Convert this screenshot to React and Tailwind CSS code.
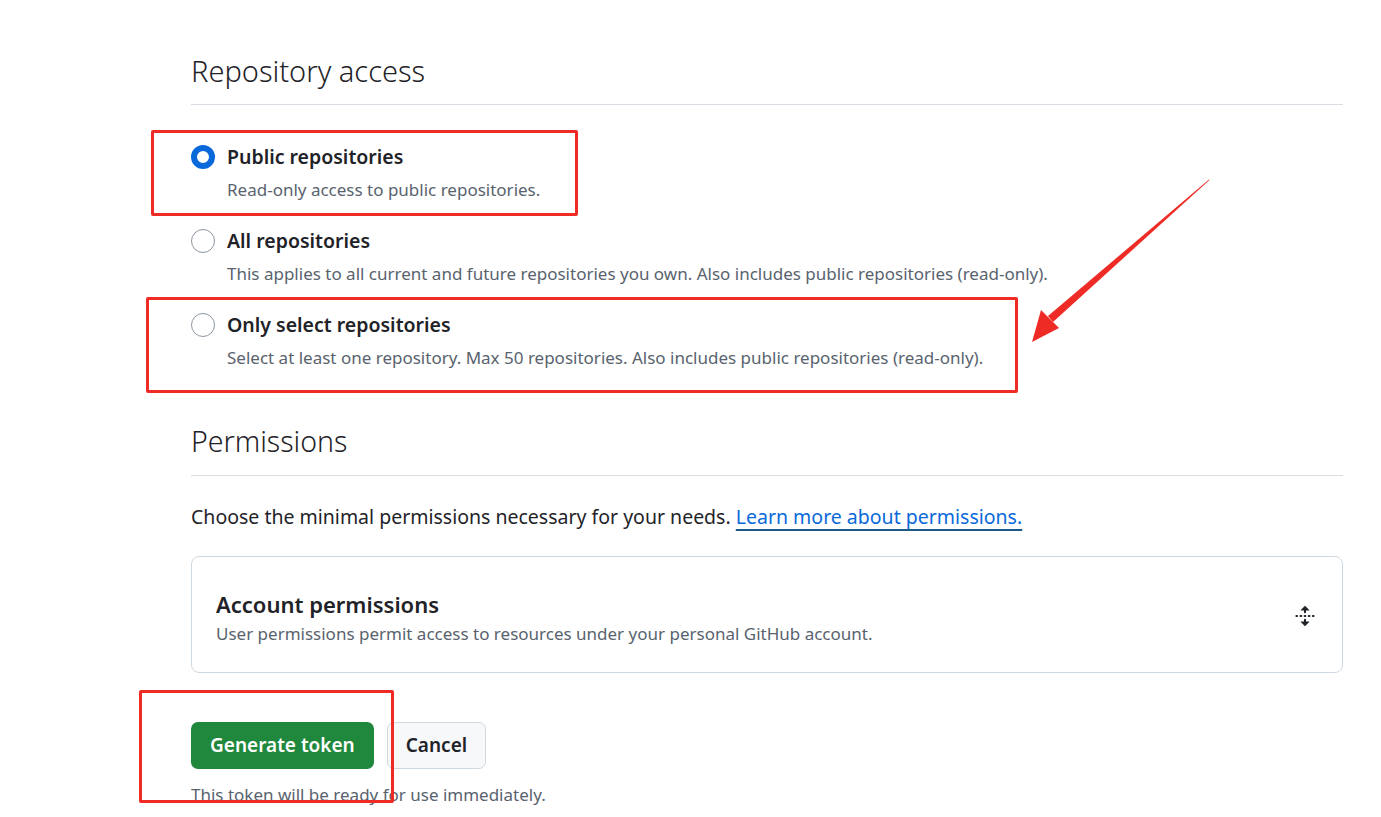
import React from "react";

const options = [
  {
    title: "Public repositories",
    desc: "Read-only access to public repositories.",
    checked: true,
  },
  {
    title: "All repositories",
    desc: "This applies to all current and future repositories you own. Also includes public repositories (read-only).",
  },
  {
    title: "Only select repositories",
    desc: "Select at least one repository. Max 50 repositories. Also includes public repositories (read-only).",
  },
];

const Radio = ({ checked }) =>
  checked ? (
    <span className="w-[24px] h-[24px] rounded-full border-[6px] border-[#0969da] bg-white shrink-0" />
  ) : (
    <span className="w-[24px] h-[24px] rounded-full border border-[#8c959f] bg-white shrink-0" />
  );

const UnfoldIcon = () => (
  <svg width="22" height="22" viewBox="0 0 16 16" fill="#1f2328">
    <path d="m8.177.677 2.896 2.896a.25.25 0 0 1-.177.427H8.75v1.25a.75.75 0 0 1-1.5 0V4H5.104a.25.25 0 0 1-.177-.427L7.823.677a.25.25 0 0 1 .354 0ZM7.25 10.75a.75.75 0 0 1 1.5 0V12h2.146a.25.25 0 0 1 .177.427l-2.896 2.896a.25.25 0 0 1-.354 0l-2.896-2.896A.25.25 0 0 1 5.104 12H7.25v-1.25Zm-5-2a.75.75 0 0 0 0-1.5h-.5a.75.75 0 0 0 0 1.5h.5ZM6 8a.75.75 0 0 1-.75.75h-.5a.75.75 0 0 1 0-1.5h.5A.75.75 0 0 1 6 8Zm2.25.75a.75.75 0 0 0 0-1.5h-.5a.75.75 0 0 0 0 1.5h.5ZM12 8a.75.75 0 0 1-.75.75h-.5a.75.75 0 0 1 0-1.5h.5A.75.75 0 0 1 12 8Zm2.25.75a.75.75 0 0 0 0-1.5h-.5a.75.75 0 0 0 0 1.5h.5Z" />
  </svg>
);

const App = () => {
  return (
    <div className="relative w-[1381px] h-[817px] bg-white overflow-hidden font-['Noto_Sans',sans-serif] text-[#1f2328]">
      <div className="ml-[191px] w-[1152px] pt-[51px]">
        {/* Repository access */}
        <h2 className="text-[29px] font-light leading-[40px] pb-[13px] border-b border-[#d8dee4]">
          Repository access
        </h2>
        <div className="mt-[37px] flex flex-col gap-[20px]">
          {options.map((o) => (
            <div key={o.title} className="flex flex-col">
              <div className="flex items-center gap-[12px] h-[30px]">
                <Radio checked={o.checked} />
                <span className="text-[19.5px] font-semibold">{o.title}</span>
              </div>
              <p className="mt-[2px] ml-[36px] text-[17px] text-[#59636e] leading-[32px]">
                {o.desc}
              </p>
            </div>
          ))}
        </div>

        {/* Permissions */}
        <h2 className="mt-[47px] text-[28.5px] font-light leading-[40px] pb-[14px] border-b border-[#d8dee4]">
          Permissions
        </h2>
        <p className="mt-[26px] text-[19.5px] leading-[30px]">
          Choose the minimal permissions necessary for your needs.{" "}
          <a className="text-[#0969da] underline underline-offset-[5px] decoration-[#1a5b8a] decoration-2">
            Learn more about permissions.
          </a>
        </p>

        <div className="mt-[24px] h-[117px] border border-[#d1d9e0] rounded-[8px] flex items-center justify-between pl-[24px] pr-[26px]">
          <div className="flex flex-col pt-[5px]">
            <span className="text-[22px] font-semibold leading-[30px]">Account permissions</span>
            <span className="mt-[3px] text-[17px] text-[#59636e] leading-[24px]">
              User permissions permit access to resources under your personal GitHub account.
            </span>
          </div>
          <div className="pt-[3px]">
            <UnfoldIcon />
          </div>
        </div>

        <div className="mt-[49px] flex gap-[13px]">
          <button className="h-[47px] px-[19px] rounded-[7px] bg-[#1f883d] text-white text-[19px] font-semibold">
            Generate token
          </button>
          <button className="h-[47px] px-[18px] rounded-[7px] bg-[#f6f8fa] border border-[#d1d9e0] text-[19px] font-semibold">
            Cancel
          </button>
        </div>
        <p className="mt-[13px] text-[17px] text-[#59636e]">
          This token will be ready for use immediately.
        </p>
      </div>

      {/* annotations */}
      <div className="absolute left-[151px] top-[130px] w-[427px] h-[86px] border-[3px] border-[#ee2b24] rounded-[2px]" />
      <div className="absolute left-[146px] top-[297px] w-[872px] h-[96px] border-[3px] border-[#ee2b24] rounded-[2px]" />
      <div className="absolute left-[139px] top-[690px] w-[255px] h-[113px] border-[3px] border-[#ee2b24] rounded-[2px]" />
      <svg className="absolute left-0 top-0" width="1381" height="817">
        <polygon points="1209,179.5 1048,316 1053,322 1209.5,180" fill="#ee2b24" />
        <polygon points="1032,342 1041,310 1059,328" fill="#ee2b24" />
      </svg>
    </div>
  );
};

export default App;
